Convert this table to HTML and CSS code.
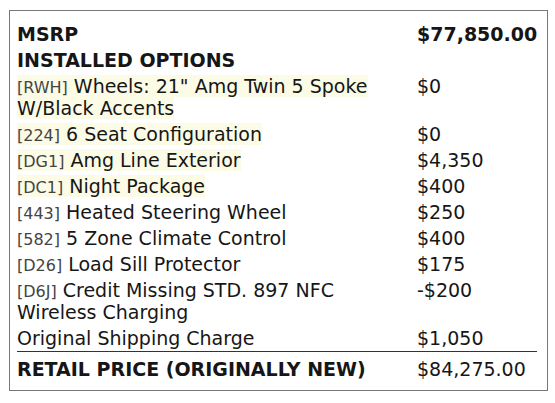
FILE: index.html
```html
<!DOCTYPE html>
<html lang="en">
<head>
    <meta charset="UTF-8">
    <meta name="viewport" content="width=device-width, initial-scale=1.0">
    <title>Window Sticker</title>
    <link rel="stylesheet" href="styles.css">
</head>
<body>
    <div class="sticker">
        <table class="price-table">
            <tr class="bold">
                <td>MSRP</td>
                <td>$77,850.00</td>
            </tr>
            <tr class="bold">
                <td>INSTALLED OPTIONS</td>
                <td></td>
            </tr>
            <tr>
                <td><span class="hl"><span class="code">[RWH]</span> Wheels: 21" Amg Twin 5 Spoke W/Black Accents</span></td>
                <td>$0</td>
            </tr>
            <tr>
                <td><span class="hl"><span class="code">[224]</span> 6 Seat Configuration</span></td>
                <td>$0</td>
            </tr>
            <tr>
                <td><span class="hl"><span class="code">[DG1]</span> Amg Line Exterior</span></td>
                <td>$4,350</td>
            </tr>
            <tr>
                <td><span class="hl"><span class="code">[DC1]</span> Night Package</span></td>
                <td>$400</td>
            </tr>
            <tr>
                <td><span class="code">[443]</span> Heated Steering Wheel</td>
                <td>$250</td>
            </tr>
            <tr>
                <td><span class="code">[582]</span> 5 Zone Climate Control</td>
                <td>$400</td>
            </tr>
            <tr>
                <td><span class="code">[D26]</span> Load Sill Protector</td>
                <td>$175</td>
            </tr>
            <tr>
                <td><span class="code">[D6J]</span> Credit Missing STD. 897 NFC Wireless Charging</td>
                <td>-$200</td>
            </tr>
            <tr>
                <td>Original Shipping Charge</td>
                <td>$1,050</td>
            </tr>
            <tr class="total">
                <td>RETAIL PRICE (ORIGINALLY NEW)</td>
                <td>$84,275.00</td>
            </tr>
        </table>
    </div>
</body>
</html>
```

FILE: styles.css
```css
body {
    margin: 0;
    padding: 10px 7px 0 9px;
    font-family: "DejaVu Sans", sans-serif;
    color: #161616;
    background-color: #fff;
}

.sticker {
    width: 523px;
    border: 1px solid #777;
    padding: 10px 7px 8px 7px;
}

.price-table {
    width: 520px;
    table-layout: fixed;
    border-collapse: collapse;
    font-size: 19px;
    line-height: 22px;
}

.price-table td {
    padding: 2px 0;
    vertical-align: top;
}

.price-table td:first-child {
    width: 400px;
    padding-right: 16px;
    box-sizing: border-box;
}

.bold td {
    font-weight: bold;
}

/* Highlighted options */
.hl {
    background-color: #fcfbe6;
}

.code {
    font-size: 16px;
    line-height: 1;
    color: #444;
}

.total td {
    border-top: 1px solid #333;
    padding-top: 6px;
}

.total td:first-child {
    font-weight: bold;
}
```
